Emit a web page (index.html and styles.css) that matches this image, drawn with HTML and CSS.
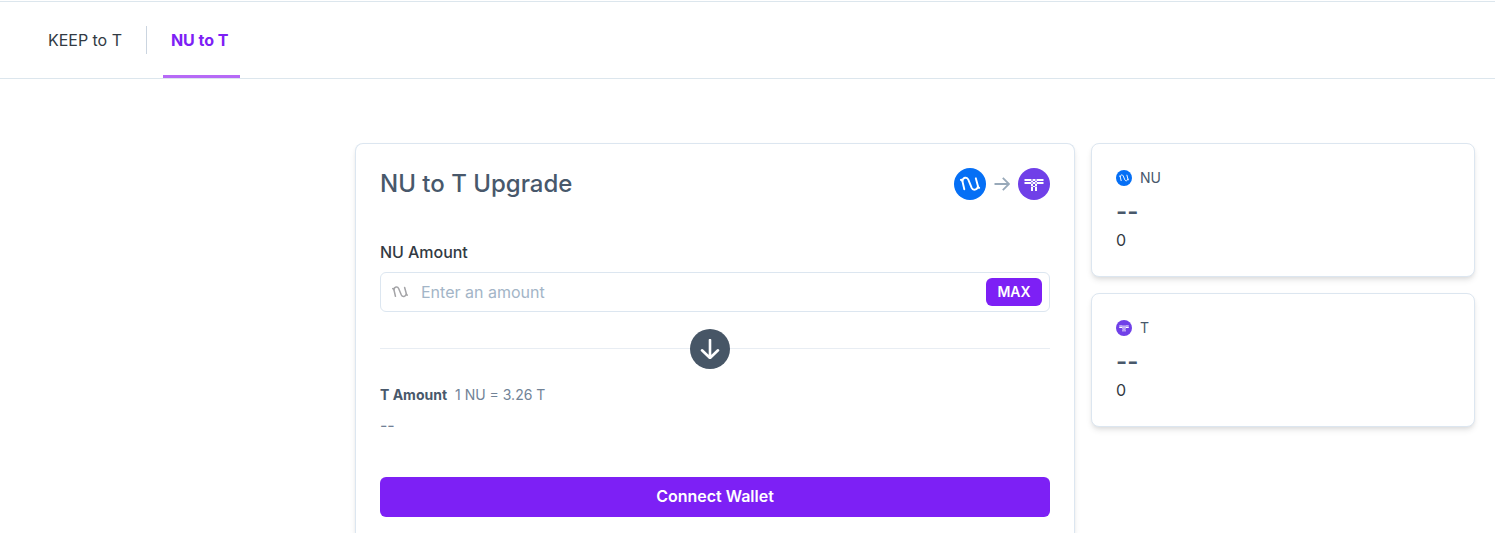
FILE: index.html
```html
<!DOCTYPE html>
<html lang="en">
<head>
<meta charset="utf-8">
<title>NU to T Upgrade</title>
<link rel="stylesheet" href="styles.css">
</head>
<body>
<svg class="defs" width="0" height="0" aria-hidden="true">
  <symbol id="nu" viewBox="0 0 32 32">
    <g fill="none" stroke="currentColor" stroke-width="1.9" stroke-linecap="round" stroke-linejoin="round">
      <path d="M6.9 11.9Q7.9 11.4 8.3 12.8L10.3 21.3"/>
      <path d="M8.4 13.1C8.8 9.3 13 8.5 14.3 11.6L17.7 19.8C19.1 22.9 23.3 22 23.9 18.4"/>
      <path d="M21.8 10.3L24.1 18.8Q24.4 20.2 25.2 19.8"/>
    </g>
  </symbol>
  <symbol id="threshold" viewBox="0 0 32 32">
    <path fill="currentColor" d="M6.5 11H13v2H6.5zM15 11h2v2h-2zM19 11h6.5v2H19zM13 13h2v1h-2zM17 13h2v1h-2zM6.5 14H13v2H6.5zM15 14h2v2h-2zM19 14h6.5v2H19zM13 16h2v2h-2zM17 16h2v2h-2zM15 18h2v1h-2zM13 19h2v4h-2zM17 19h2v4h-2z"/>
    <path fill="currentColor" fill-opacity=".45" d="M13 11h2v2h-2zM17 11h2v2h-2zM13 14h2v2h-2zM17 14h2v2h-2zM13 18h2v1h-2zM17 18h2v1h-2z"/>
  </symbol>
</svg>
<nav class="tabs">
  <a class="tab">KEEP to T</a>
  <span class="tab-divider"></span>
  <a class="tab tab-active">NU to T</a>
</nav>
<main class="content">
  <section class="card upgrade">
    <header class="upgrade-head">
      <h1 class="title">NU to T Upgrade</h1>
      <div class="route">
        <svg class="token token-nu"><use href="#nu"/></svg>
        <svg class="route-arrow" viewBox="0 0 16 16"><path d="M0.5 8H15M8.8 1.8L15 8L8.8 14.2"/></svg>
        <svg class="token token-t"><use href="#threshold"/></svg>
      </div>
    </header>
    <label class="label" for="amount">NU Amount</label>
    <div class="field">
      <svg class="field-icon" viewBox="6 6 20 20"><use href="#nu" width="32" height="32"/></svg>
      <input class="input" id="amount" placeholder="Enter an amount">
      <button class="max">MAX</button>
    </div>
    <div class="separator">
      <span class="separator-icon">
        <svg class="down" viewBox="0 0 20 20"><path d="M10 1V19M2 11.3L10 19L18 11.3"/></svg>
      </span>
    </div>
    <p class="rate"><strong class="rate-label">T Amount</strong><span>1 NU = 3.26 T</span></p>
    <p class="result">--</p>
    <button class="connect">Connect Wallet</button>
  </section>
  <aside class="balances">
    <section class="card balance">
      <div class="balance-name"><svg class="token token-small token-nu"><use href="#nu"/></svg><span>NU</span></div>
      <p class="balance-value">--</p>
      <p class="balance-sub">0</p>
    </section>
    <section class="card balance">
      <div class="balance-name"><svg class="token token-small token-t"><use href="#threshold"/></svg><span>T</span></div>
      <p class="balance-value">--</p>
      <p class="balance-sub">0</p>
    </section>
  </aside>
</main>
</body>
</html>
```
FILE: styles.css
```css
* { box-sizing: border-box; margin: 0; }
body {
  height: 533px;
  padding-top: 1px;
  overflow: hidden;
  background: #fff;
  color: #323a43;
  font: 400 16px/24px Inter, sans-serif;
}
button, input { font: inherit; }
.defs { display: none; }
.tabs {
  display: flex;
  height: 78px;
  padding-left: 40px;
  border-top: 1px solid #dce6ed;
  border-bottom: 1px solid #dce6ed;
}
.tab { height: 76px; padding: 26px 8px 0; letter-spacing: -0.03px; }
.tab-active {
  width: 77px;
  border-bottom: 3px solid #b66af6;
  color: #7d20f5;
  font-weight: 700;
  letter-spacing: -0.03px;
}
.tab-divider { width: 1px; height: 28px; margin: 24px 16px 0; background: #cbd5e0; }
.content { display: flex; align-items: flex-start; gap: 16px; padding: 64px 20px 0 355px; }
.card {
  border: 1px solid #dce6f0;
  border-radius: 8px;
  background: #fff;
  box-shadow: 0 4px 6px -1px rgba(0,0,0,.1), 0 2px 4px -1px rgba(0,0,0,.06);
}
.upgrade {
  width: 720px;
  height: 390px;
  padding: 24px 24px 0;
  border-bottom: 0;
  border-radius: 8px 8px 0 0;
}
.upgrade-head { display: flex; justify-content: space-between; height: 32px; margin-bottom: 40px; }
.title { color: #48586b; font-size: 24px; line-height: 32px; font-weight: 500; }
.route { display: flex; align-items: center; gap: 8px; }
.token { width: 32px; height: 32px; border-radius: 50%; color: #fff; }
.token-small { width: 16px; height: 16px; }
.token-nu { background: #056ff5; }
.token-t { background: #7040e8; }
.route-arrow { width: 16px; height: 16px; fill: none; stroke: #98a9b9; stroke-width: 1.8; }
.label { display: block; margin-bottom: 8px; font-weight: 500; letter-spacing: -0.05px; }
.field {
  display: flex;
  align-items: center;
  height: 40px;
  padding: 0 7px 0 11px;
  border: 1px solid #dce6f0;
  border-radius: 6px;
}
.field-icon { width: 16px; height: 16px; margin-right: 13px; color: #a5a5a8; }
.input { flex: 1; padding: 0; border: 0; outline: 0; background: none; }
.input::placeholder { color: #a3b5c7; opacity: 1; }
.max {
  width: 56px;
  height: 28px;
  padding: 0;
  border: 0;
  border-radius: 6px;
  background: #7d20f5;
  color: #fff;
  font-size: 14px;
  font-weight: 600;
}
.separator {
  display: flex;
  justify-content: center;
  height: 40px;
  margin: 17px 0 16px;
  padding-right: 10px;
  background: linear-gradient(#e8edf3, #e8edf3) 0 19px / 100% 1px no-repeat;
}
.separator-icon {
  display: flex;
  align-items: center;
  justify-content: center;
  width: 40px;
  height: 40px;
  border-radius: 50%;
  background: #475666;
}
.down { width: 20px; height: 20px; fill: none; stroke: #fff; stroke-width: 2.6; stroke-linecap: round; stroke-linejoin: round; }
.rate { display: flex; gap: 8px; height: 20px; margin-bottom: 8px; color: #718397; font-size: 14px; line-height: 20px; }
.rate-label { color: #48586b; font-weight: 700; }
.result { height: 24px; margin-bottom: 40px; color: #718096; }
.connect {
  width: 100%;
  height: 40px;
  padding: 0 0 2px;
  border: 0;
  border-radius: 6px;
  background: #7d20f5;
  color: #fff;
  font-weight: 600;
}
.balances { display: flex; flex: 1; flex-direction: column; gap: 16px; }
.balance { height: 134px; padding: 24px; }
.balance-name { display: flex; align-items: center; gap: 8px; height: 20px; margin-bottom: 8px; color: #48586b; font-size: 14px; }
.balance-value { height: 32px; color: #48586b; font-size: 24px; line-height: 32px; font-weight: 600; }
.balance-sub { height: 24px; }
```
